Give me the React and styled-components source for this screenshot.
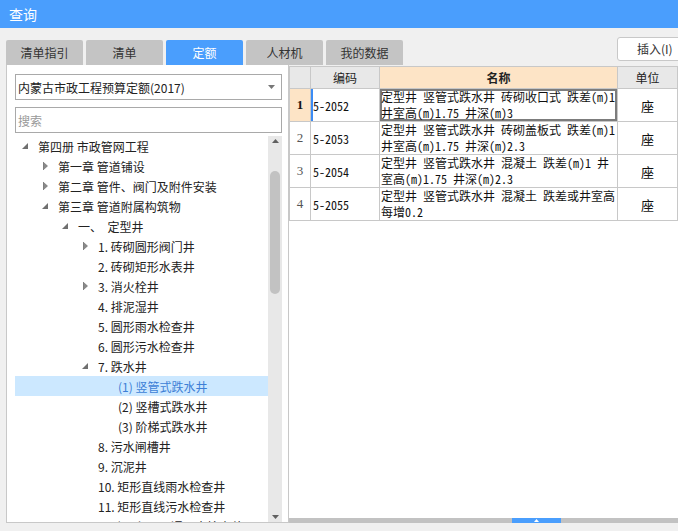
import React from 'react';
import styled, { createGlobalStyle } from 'styled-components';

const GlobalStyle = createGlobalStyle`
  html, body { margin: 0; padding: 0; background: #f0f0f0; }
  body {
    font-family: "Noto Sans CJK SC", "Microsoft YaHei", sans-serif;
    font-size: 12px;
    color: #222;
    overflow: hidden;
  }
  * { box-sizing: border-box; }
`;

const Window = styled.div`
  width: 678px;
  height: 531px;
  display: flex;
  flex-direction: column;
  overflow: hidden;
  background: #f0f0f0;
`;

const TitleBar = styled.div`
  height: 28px;
  flex-shrink: 0;
  background: #4a9efd;
  color: #fff;
  font-size: 14px;
  line-height: 28px;
  padding-left: 9px;
`;

const TabBar = styled.div`
  height: 37px;
  flex-shrink: 0;
  display: flex;
  align-items: flex-end;
  gap: 3px;
  padding-left: 6px;
`;

const Tab = styled.div`
  width: 77px;
  height: 25px;
  flex-shrink: 0;
  line-height: 25px;
  text-align: center;
  border-radius: 2px 2px 0 0;
  background: ${(p) => (p.$active ? '#4a9efd' : '#c4c4c4')};
  color: ${(p) => (p.$active ? '#fff' : '#333')};
`;

const InsertButton = styled.div`
  margin-left: auto;
  margin-right: -11px;
  align-self: flex-start;
  margin-top: 9px;
  width: 72px;
  height: 24px;
  flex-shrink: 0;
  background: #fff;
  border: 1px solid #c8c8c8;
  border-radius: 3px;
  line-height: 22px;
  padding-left: 19px;
  color: #333;
`;

const Main = styled.div`
  height: 458px;
  flex-shrink: 0;
  display: flex;
`;

const LeftPanel = styled.div`
  width: 283px;
  margin-left: 6px;
  background: #fff;
  border-left: 1px solid #c8c8c8;
  border-right: 1px solid #c8c8c8;
  border-bottom: 1px solid #c8c8c8;
  padding: 9px 6px 0 8px;
  display: flex;
  flex-direction: column;
`;

const Select = styled.div`
  height: 26px;
  border: 1px solid #a9a9a9;
  display: flex;
  align-items: center;
  justify-content: space-between;
  padding: 0 6px 0 2px;
  color: #222;
`;

const SearchBox = styled.div`
  margin-top: 7px;
  height: 26px;
  border: 1px solid #a9a9a9;
  display: flex;
  align-items: center;
  padding-left: 2px;
  color: #999;
`;

const TreeArea = styled.div`
  margin-top: 3px;
  flex: 1;
  display: flex;
  overflow: hidden;
`;

const TreeList = styled.div`
  width: 253px;
  overflow: hidden;
`;

const TreeRow = styled.div`
  height: 20px;
  display: flex;
  align-items: center;
  padding-left: ${(p) => p.$level * 20 + 2}px;
  background: ${(p) => (p.$selected ? '#cce8ff' : 'transparent')};
  color: ${(p) => (p.$selected ? '#3d7fd6' : '#222')};
  white-space: pre;
`;

const Toggle = styled.span`
  width: 16px;
  height: 20px;
  margin-right: 5px;
  display: flex;
  align-items: center;
  justify-content: center;
  flex-shrink: 0;
`;

const ScrollTrack = styled.div`
  width: 14px;
  background: #e8e8e8;
  display: flex;
  flex-direction: column;
  align-items: center;
`;

const ArrowBox = styled.div`
  height: 10px;
  width: 14px;
  display: flex;
  align-items: center;
  justify-content: center;
  flex-shrink: 0;
`;

const Thumb = styled.div`
  width: 10px;
  border-radius: 5px;
  background: #c2c2c2;
  flex-shrink: 0;
`;

const Spacer = styled.div`
  flex: 1;
`;

const RightPanel = styled.div`
  flex: 1;
  display: flex;
  flex-direction: column;
  background: #fff;
  border-top: 1px solid #f0f0f0;
`;

const Grid = styled.div`
  display: grid;
  grid-template-columns: 21px 69px 238px 60px;
  border-left: 1px solid #c8c8c8;
`;

const HeaderCell = styled.div`
  height: 23px;
  border-top: 1px solid #c8c8c8;
  border-right: 1px solid #c8c8c8;
  border-bottom: 1px solid #c8c8c8;
  background: ${(p) => (p.$accent ? '#fde4c6' : '#e8e8e8')};
  font-weight: ${(p) => (p.$bold ? 700 : 400)};
  display: flex;
  align-items: center;
  justify-content: center;
  color: #222;
`;

const Cell = styled.div`
  height: 33px;
  border-right: 1px solid #c8c8c8;
  border-bottom: 1px solid #c8c8c8;
  display: flex;
  align-items: center;
`;

const NumCell = styled(Cell)`
  justify-content: center;
  font-family: "Liberation Serif", "Times New Roman", serif;
  font-size: 13px;
  font-weight: ${(p) => (p.$current ? 700 : 400)};
  color: ${(p) => (p.$current ? '#111' : '#555')};
  background: ${(p) => (p.$current ? '#fde4c6' : '#fff')};
`;

const CodeCell = styled(Cell)`
  padding-left: 2px;
  font-family: "Noto Sans Mono CJK SC", "Liberation Mono", monospace;
  font-size: 12px;
  color: #111;
  box-shadow: ${(p) => (p.$current ? 'inset 2px 0 0 #3b8cf5' : 'none')};
`;

const NameCell = styled(Cell)`
  padding-left: 1px;
  font-family: "Noto Sans Mono CJK SC", "Noto Sans CJK SC", monospace;
  font-size: 12px;
  line-height: 16px;
  white-space: pre;
  overflow: hidden;
  color: #111;
  box-shadow: ${(p) => (p.$current ? 'inset 0 0 0 2px #7c7c7c' : 'none')};
`;

const UnitCell = styled(Cell)`
  justify-content: center;
  font-size: 13px;
  color: #111;
`;

const HScrollBar = styled.div`
  height: 5px;
  flex-shrink: 0;
  background: #c2c2c2;
  display: flex;
`;

const SplitHandle = styled.div`
  margin-left: 223px;
  width: 49px;
  background: #4a9efd;
  display: flex;
  align-items: center;
  justify-content: center;
`;

const Footer = styled.div`
  height: 8px;
  flex-shrink: 0;
`;

const Expanded = () => (
  <svg width="6" height="6" viewBox="0 0 6 6">
    <polygon points="6,0 6,6 0,6" fill="#6f6f6f" />
  </svg>
);

const Collapsed = () => (
  <svg width="5" height="8" viewBox="0 0 5 8">
    <polygon points="0,0 4.5,4 0,8" fill="#8a8a8a" stroke="#6a6a6a" strokeWidth="0.6" />
  </svg>
);

const DownCaret = ({ color = '#777' }) => (
  <svg width="7" height="4" viewBox="0 0 7 4">
    <polygon points="0,0 7,0 3.5,4" fill={color} />
  </svg>
);

const UpCaret = ({ color = '#606060', w = 7, h = 4 }) => (
  <svg width={w} height={h} viewBox={`0 0 ${w} ${h}`}>
    <polygon points={`0,${h} ${w},${h} ${w / 2},0`} fill={color} />
  </svg>
);

const tree = [
  { l: 0, t: '第四册 市政管网工程', e: 'open' },
  { l: 1, t: '第一章 管道铺设', e: 'closed' },
  { l: 1, t: '第二章 管件、阀门及附件安装', e: 'closed' },
  { l: 1, t: '第三章 管道附属构筑物', e: 'open' },
  { l: 2, t: '一、  定型井', e: 'open' },
  { l: 3, t: '1. 砖砌圆形阀门井', e: 'closed' },
  { l: 3, t: '2. 砖砌矩形水表井' },
  { l: 3, t: '3. 消火栓井', e: 'closed' },
  { l: 3, t: '4. 排泥湿井' },
  { l: 3, t: '5. 圆形雨水检查井' },
  { l: 3, t: '6. 圆形污水检查井' },
  { l: 3, t: '7. 跌水井', e: 'open' },
  { l: 4, t: '(1) 竖管式跌水井', sel: true },
  { l: 4, t: '(2) 竖槽式跌水井' },
  { l: 4, t: '(3) 阶梯式跌水井' },
  { l: 3, t: '8. 污水闸槽井' },
  { l: 3, t: '9. 沉泥井' },
  { l: 3, t: '10. 矩形直线雨水检查井' },
  { l: 3, t: '11. 矩形直线污水检查井' },
  { l: 3, t: '12. 矩形90°三通雨水检查井' },
];

const rows = [
  { n: '1', code: '5-2052', name: '定型井 竖管式跌水井 砖砌收口式 跌差(m)1\n井室高(m)1.75 井深(m)3' },
  { n: '2', code: '5-2053', name: '定型井 竖管式跌水井 砖砌盖板式 跌差(m)1\n井室高(m)1.75 井深(m)2.3' },
  { n: '3', code: '5-2054', name: '定型井 竖管式跌水井 混凝土 跌差(m)1 井\n室高(m)1.75 井深(m)2.3' },
  { n: '4', code: '5-2055', name: '定型井 竖管式跌水井 混凝土 跌差或井室高\n每增0.2' },
];

const tabs = ['清单指引', '清单', '定额', '人材机', '我的数据'];

export default function App() {
  return (
    <>
      <GlobalStyle />
      <Window>
        <TitleBar>查询</TitleBar>
        <TabBar>
          {tabs.map((t) => (
            <Tab key={t} $active={t === '定额'}>{t}</Tab>
          ))}
          <InsertButton>插入(I)</InsertButton>
        </TabBar>
        <Main>
          <LeftPanel>
            <Select>
              <span>内蒙古市政工程预算定额(2017)</span>
              <DownCaret />
            </Select>
            <SearchBox>搜索</SearchBox>
            <TreeArea>
              <TreeList>
                {tree.map((r, i) => (
                  <TreeRow key={i} $level={r.l} $selected={r.sel}>
                    <Toggle>
                      {r.e === 'open' && <Expanded />}
                      {r.e === 'closed' && <Collapsed />}
                    </Toggle>
                    {r.t}
                  </TreeRow>
                ))}
              </TreeList>
              <ScrollTrack>
                <ArrowBox><UpCaret /></ArrowBox>
                <Thumb style={{ marginTop: 25, height: 123 }} />
                <Spacer />
                <ArrowBox><DownCaret color="#606060" /></ArrowBox>
              </ScrollTrack>
            </TreeArea>
          </LeftPanel>
          <RightPanel>
            <Grid>
              <HeaderCell />
              <HeaderCell>编码</HeaderCell>
              <HeaderCell $accent $bold>名称</HeaderCell>
              <HeaderCell>单位</HeaderCell>
              {rows.map((r, i) => (
                <React.Fragment key={r.code}>
                  <NumCell $current={i === 0}>{r.n}</NumCell>
                  <CodeCell $current={i === 0}>{r.code}</CodeCell>
                  <NameCell $current={i === 0}>{r.name}</NameCell>
                  <UnitCell>座</UnitCell>
                </React.Fragment>
              ))}
            </Grid>
            <Spacer />
            <HScrollBar>
              <SplitHandle>
                <UpCaret color="#fff" w={5} h={3} />
              </SplitHandle>
            </HScrollBar>
          </RightPanel>
        </Main>
        <Footer />
      </Window>
    </>
  );
}
